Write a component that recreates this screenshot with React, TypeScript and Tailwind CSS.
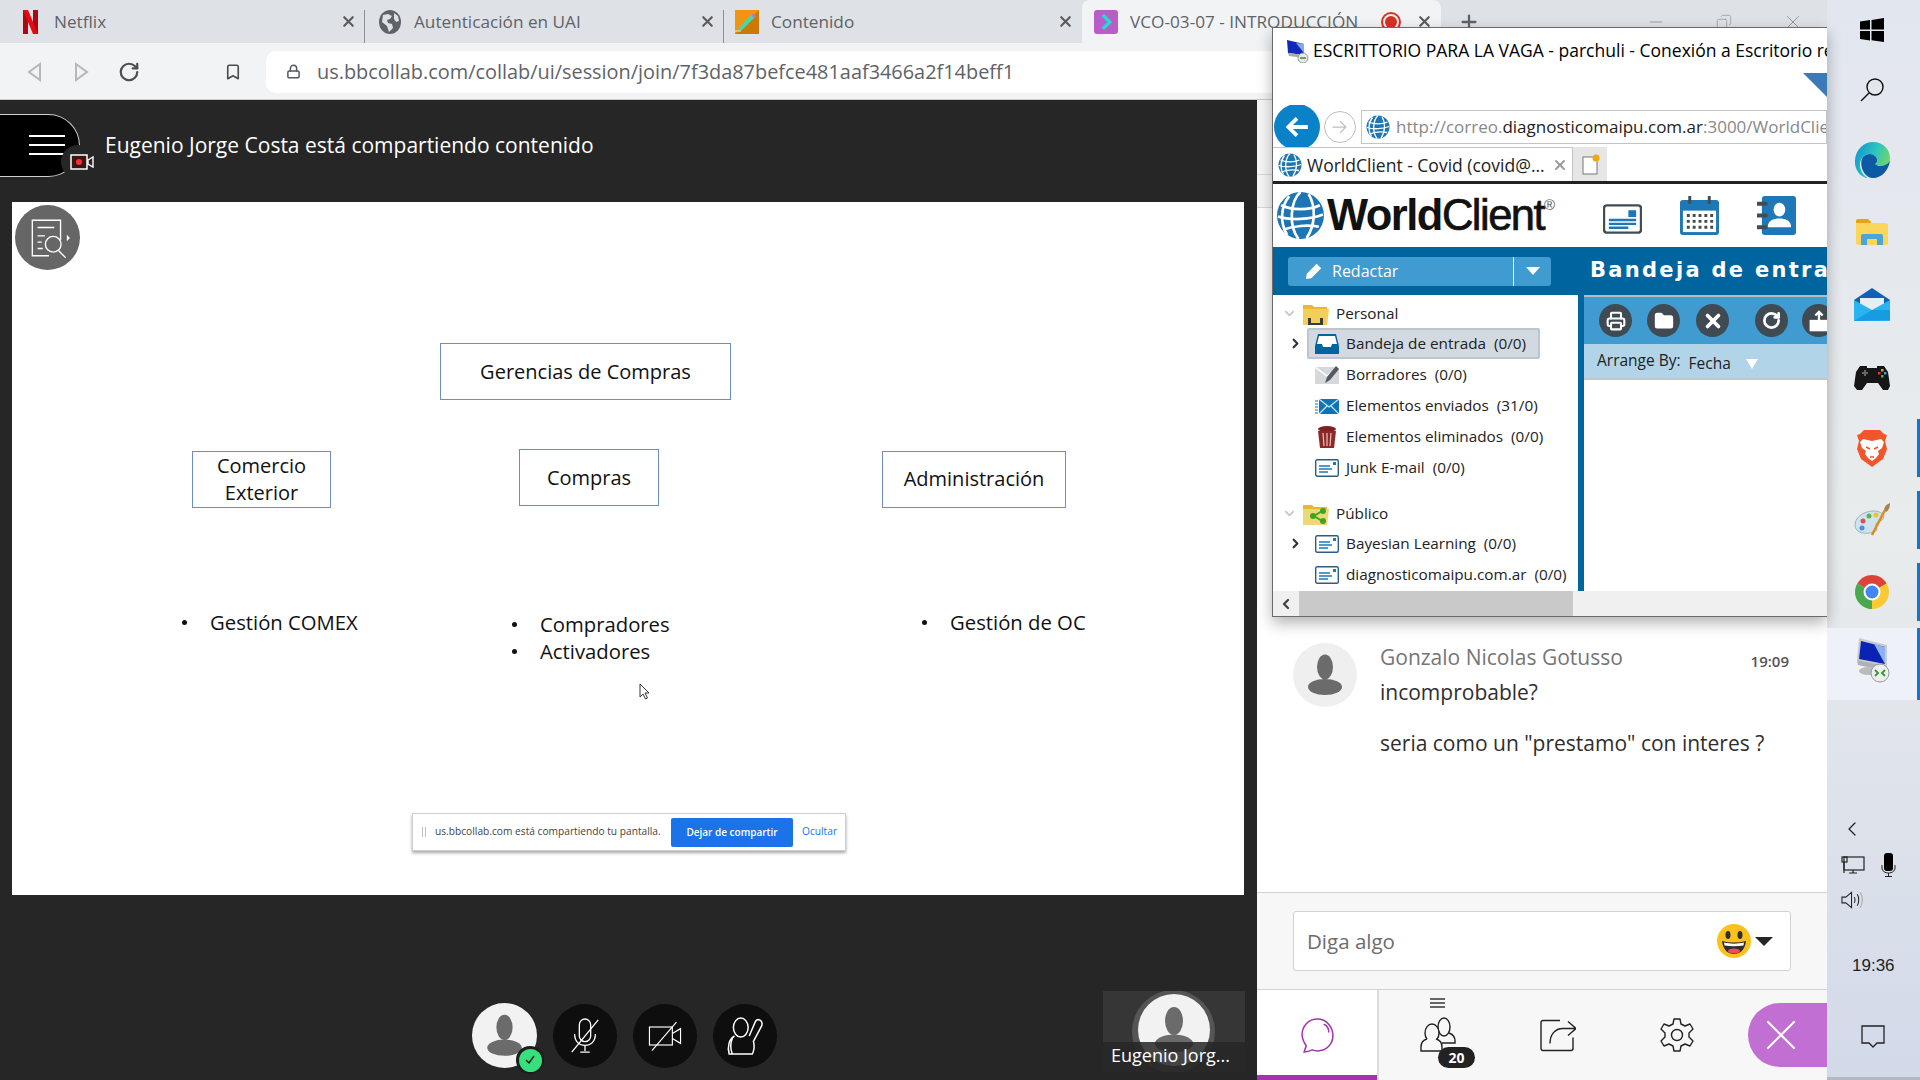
import { ChevronDown, ChevronLeft, ChevronRight, Copy, Lock, Bookmark, RotateCw, Plus, X, Printer, Folder, Minus } from "lucide-react";

function Earth({ className }: { className: string }) {
  return (
    <svg viewBox="0 0 48 48" className={className}>
      <circle cx="24" cy="24" r="23" fill="#1d75b3" />
      <g fill="none" stroke="#fff" strokeWidth="2.6">
        <path d="M5 14c10 5 28 5 38 0M2 25c12 4 32 3 44-2M7 38c10-4 24-5 35-3" />
        <path d="M24 1C14 10 12 34 22 47M32 3c7 12 7 30-2 43M13 5C4 16 4 32 11 43" />
      </g>
    </svg>
  );
}

function NetflixIcon() {
  return (
    <svg viewBox="0 0 15 24" className="h-[24px] w-[15px]">
      <path d="M0 0h5v24H0z" fill="#b1060f" />
      <path d="M10 0h5v24h-5z" fill="#b1060f" />
      <path d="M0 0h5l10 24h-5z" fill="#e50914" />
    </svg>
  );
}

function GrayGlobe() {
  return (
    <svg viewBox="0 0 22 24" className="h-[24px] w-[22px]">
      <ellipse cx="11" cy="12" rx="11" ry="12" fill="#5f6368" />
      <path d="M4 5l5-1 4 2-2 3-3 1 1 3 4 1 1 4-4 4-2-6-5-4zM15 3l4 3 1 5-3 1-2-3z" fill="#dee1e6" />
    </svg>
  );
}

function PencilTab() {
  return (
    <svg viewBox="0 0 24 24" className="size-[24px]">
      <rect width="24" height="24" fill="#f59311" />
      <path d="M0 24h24V0z" fill="#cc7a05" />
      <path d="M4 18L17 4l3 3L7 20l-4 1z" fill="#43d9b0" />
      <path d="M16 5l2-2 3 3-2 2z" fill="#d06ed8" />
      <path d="M0 21h6" stroke="#fff" strokeWidth="0.8" />
    </svg>
  );
}

function CollabTab() {
  return (
    <svg viewBox="0 0 24 24" className="size-[24px]">
      <rect width="24" height="24" rx="3" fill="#b85cc8" />
      <path d="M9 5l7 7-7 7" fill="none" stroke="#2be0c0" strokeWidth="3" />
      <path d="M8 6l6 6-6 6" fill="none" stroke="#32c0ff" strokeWidth="1.4" />
    </svg>
  );
}

function BrowserTab({ width, icon, title, active, separator }: { width: string; icon: React.ReactNode; title: string; active?: boolean; separator?: boolean }) {
  return (
    <div className={`relative flex h-[43px] shrink-0 items-center ${width} ${active ? "rounded-t-lg bg-[#f2f3f5]" : ""}`}>
      <span className="flex w-[24px] shrink-0 justify-center">{icon}</span>
      <span className="ml-[12px] flex-1 overflow-hidden whitespace-nowrap text-[17.2px] text-[#5f6368]">{title}</span>
      {active ? <span className="ml-[8px] mr-[15px] grid size-[20px] shrink-0 place-items-center rounded-full border-2 border-[#d93025]"><span className="size-[12px] rounded-full bg-[#d93025]" /></span> : null}
      <X className="mr-[8px] size-[17px] shrink-0 text-[#5a5a5a]" strokeWidth={3} />
      {separator ? <span className="absolute bottom-0 right-0 top-[10px] w-px bg-[#8b8e92]" /> : null}
    </div>
  );
}

function TabStrip() {
  return (
    <div className="flex h-[43px] items-center bg-[#dee1e6]">
      <BrowserTab width="w-[365px] pl-[18px]" icon={<NetflixIcon />} title="Netflix" separator />
      <BrowserTab width="w-[359px] pl-[13px]" icon={<GrayGlobe />} title="Autenticación en UAI" separator />
      <BrowserTab width="w-[358px] pl-[11px]" icon={<PencilTab />} title="Contenido" />
      <BrowserTab width="w-[359px] pl-[12px]" icon={<CollabTab />} title="VCO-03-07 - INTRODUCCIÓN" active />
      <Plus className="ml-[17px] size-[22px] text-[#5f6368]" strokeWidth={2.5} />
      <div className="ml-auto flex items-center gap-[50px] pr-[23px] text-[#8d8f93]">
        <Minus className="size-[20px]" strokeWidth={1} />
        <Copy className="size-[16px] -scale-x-100" strokeWidth={1} />
        <X className="size-[22px]" strokeWidth={1} />
      </div>
    </div>
  );
}

function Toolbar() {
  return (
    <div className="flex h-[57px] items-center border-b border-[#c9c9c9] bg-[#f2f3f5] pl-[26px] pt-[1px]">
      <svg viewBox="0 0 16 20" className="h-[20px] w-[16px]"><path d="M14 2L3 10l11 8z" fill="none" stroke="#b5b7ba" strokeWidth="2" /></svg>
      <svg viewBox="0 0 16 20" className="ml-[32px] h-[20px] w-[16px]"><path d="M2 2l11 8-11 8z" fill="none" stroke="#b5b7ba" strokeWidth="2" /></svg>
      <RotateCw className="ml-[28px] size-[22px] text-[#4a4d51]" strokeWidth={2.4} />
      <Bookmark className="ml-[84px] h-[22px] w-[18px] text-[#4a4d51]" strokeWidth={2.2} />
      <div className="ml-[24px] flex h-[42px] flex-1 items-center rounded-l-[10px] bg-white pl-[20px]">
        <Lock className="size-[15px] text-[#55585c]" strokeWidth={2.4} />
        <span className="ml-[16px] text-[19.9px] text-[#5f6368]">us.bbcollab.com/collab/ui/session/join/7f3da87befce481aaf3466a2f14beff1</span>
      </div>
    </div>
  );
}

function SessionHeader() {
  return (
    <div className="flex h-[102px] shrink-0 items-center pb-[12px]">
      <div className="relative flex h-[63px] w-[80px] items-center justify-end rounded-r-[32px] border border-l-0 border-[#d0d0d0] bg-black pr-[14px]">
        <div className="flex w-[36px] flex-col gap-[7px]">
          <span className="h-[2px] bg-white" />
          <span className="h-[2px] bg-white" />
          <span className="h-[2px] bg-white" />
        </div>
        <span className="absolute -right-[16px] top-[30px] flex size-[34px] items-center justify-end rounded-full bg-[#262626] pr-[1px]">
          <svg viewBox="0 0 24 16" className="h-[16px] w-[24px]">
            <rect x="1" y="1" width="16" height="14" fill="#3a1616" stroke="#fff" strokeWidth="1.5" />
            <circle cx="9" cy="8" r="3" fill="#ff2d2d" />
            <path d="M18 6l5-3v10l-5-3z" fill="none" stroke="#fff" strokeWidth="1.4" />
          </svg>
        </span>
      </div>
      <span className="ml-[25px] mt-[2px] text-[21px] text-white">Eugenio Jorge Costa está compartiendo contenido</span>
    </div>
  );
}

function SlideBox({ className, children }: { className: string; children: React.ReactNode }) {
  return (
    <div className={`absolute flex items-center justify-center border border-[#6d8ebf] text-center text-[20px] leading-[27px] text-[#111] ${className}`}>
      {children}
    </div>
  );
}

function Bullet({ className, children }: { className: string; children: string }) {
  return (
    <div className={`absolute flex items-center text-[20.3px] leading-[27px] text-[#111] ${className}`}>
      <span className="flex w-[28px]"><span className="size-[5px] rounded-full bg-[#111]" /></span>
      {children}
    </div>
  );
}

function Slide() {
  return (
    <div className="relative ml-[12px] h-[693px] w-[1232px] shrink-0 bg-white">
      <div className="absolute left-[3px] top-[3px] grid size-[65px] place-items-center rounded-full bg-[#666]">
        <svg viewBox="0 0 44 44" className="size-[46px]" fill="none" stroke="#fff" strokeWidth="1.3">
          <path d="M34 24V5H7v34h16" />
          <path d="M12 12h16M12 20h7M12 26h4M12 32h5" />
          <circle cx="27" cy="28" r="7.5" />
          <path d="M32 34l7 7" />
          <path d="M40 19l3 3-3 3z" fill="#fff" stroke="none" />
        </svg>
      </div>
      <SlideBox className="left-[428px] top-[141px] h-[57px] w-[291px]">Gerencias de Compras</SlideBox>
      <SlideBox className="left-[180px] top-[249px] h-[57px] w-[139px] pb-[2px]"><span>Comercio<br />Exterior</span></SlideBox>
      <SlideBox className="left-[507px] top-[247px] h-[57px] w-[140px]">Compras</SlideBox>
      <SlideBox className="left-[870px] top-[249px] h-[57px] w-[184px] pb-[2px]">Administración</SlideBox>
      <Bullet className="left-[170px] top-[407px]">Gestión COMEX</Bullet>
      <Bullet className="left-[500px] top-[409px]">Compradores</Bullet>
      <Bullet className="left-[500px] top-[436px]">Activadores</Bullet>
      <Bullet className="left-[910px] top-[407px]">Gestión de OC</Bullet>
      <svg viewBox="0 0 12 18" className="absolute left-[627px] top-[481px] h-[18px] w-[12px]">
        <path d="M1 1v13l3-3 2.500 5 2-1-2.500-5h4z" fill="#fff" stroke="#333" strokeWidth="1" />
      </svg>
      <div className="absolute left-[400px] top-[611px] flex h-[38px] w-[434px] items-center border border-[#cfcfcf] bg-white pl-[9px] shadow-[0_2px_3px_rgba(0,0,0,.35)]">
        <span className="flex gap-[2px]"><span className="h-[10px] w-px bg-[#bbb]" /><span className="h-[10px] w-px bg-[#bbb]" /></span>
        <span className="ml-[9px] w-[228px] shrink-0 whitespace-nowrap text-[10.2px] text-[#444]">us.bbcollab.com está compartiendo tu pantalla.</span>
        <span className="ml-[8px] flex h-[29px] w-[122px] shrink-0 items-center justify-center rounded-[2px] bg-[#1a73e8] text-[10px] font-semibold text-white">Dejar de compartir</span>
        <span className="ml-[9px] text-[10.2px] text-[#1a73e8]">Ocultar</span>
      </div>
    </div>
  );
}

function UserSilhouette({ className }: { className: string }) {
  return (
    <svg viewBox="0 0 64 64" className={className}>
      <ellipse cx="32" cy="24" rx="8" ry="12.500" fill="#6b6b6b" />
      <ellipse cx="32" cy="44" rx="17" ry="8" fill="#6b6b6b" />
    </svg>
  );
}

function RoundControl({ children }: { children: React.ReactNode }) {
  return <div className="grid size-[64px] place-items-center rounded-full bg-[#0e0e0e]">{children}</div>;
}

function SessionControls() {
  return (
    <div className="relative flex-1">
      <div className="absolute left-[472px] top-[108px] flex items-center gap-[16px]">
        <div className="relative size-[65px] rounded-full bg-[#f2f2f2]">
          <UserSilhouette className="size-full" />
          <span className="absolute -bottom-[6px] -right-[7px] grid size-[28px] place-items-center rounded-full bg-[#1c1c1c]">
            <span className="grid size-[23px] place-items-center rounded-full bg-[#36e07c]">
              <svg viewBox="0 0 12 12" className="size-[12px]"><path d="M2 6l3 3 5-7" fill="none" stroke="#111" strokeWidth="1.3" /></svg>
            </span>
          </span>
        </div>
        <RoundControl>
          <svg viewBox="0 0 36 40" className="h-[40px] w-[34px]" fill="none" stroke="#fff" strokeWidth="1.4">
            <rect x="12" y="2" width="12" height="24" rx="6" />
            <path d="M7 18c0 8 5 12 11 12s11-4 11-12M18 30v6M13 37h10" />
            <path d="M4 37L32 3" />
          </svg>
        </RoundControl>
        <RoundControl>
          <svg viewBox="0 0 44 40" className="h-[40px] w-[36px]" fill="none" stroke="#fff" strokeWidth="1.4">
            <rect x="3" y="9" width="28" height="22" />
            <path d="M31 17l10-6v18l-10-6" />
            <path d="M6 38L36 3" />
          </svg>
        </RoundControl>
        <RoundControl>
          <svg viewBox="0 0 36 36" className="size-[38px]" fill="none" stroke="#fff" strokeWidth="1.4">
            <ellipse cx="14" cy="10" rx="7" ry="9" />
            <path d="M8 18c-5 3-7 10-5 17h22c2-4 2-8 1-12l8-15c1-5-4-7-6-4l-6 14" />
            <path d="M6 20c-2 5-2 10 0 15" />
          </svg>
        </RoundControl>
      </div>
      <div className="absolute bottom-[8px] left-[1103px] h-[81px] w-[142px] overflow-hidden bg-[#363636]">
        <div className="absolute left-[29px] -top-[1px] size-[83px] rounded-full bg-[#555]" />
        <div className="absolute left-[35px] top-[3px] size-[72px] rounded-full bg-[#f2f2f2]">
          <UserSilhouette className="size-full" />
        </div>
        <div className="absolute inset-x-0 bottom-0 flex h-[30px] items-center whitespace-nowrap bg-[#262626]/85 pb-[3px] pl-[8px] text-[18px] text-white">Eugenio Jorg...</div>
      </div>
    </div>
  );
}

function ChatPanel() {
  return (
    <div className="flex flex-1 flex-col bg-white">
      <div className="h-[75px] shrink-0 border-b border-[#d9d9d9] bg-[#f6f6f6]" />
      <div className="h-[33px] shrink-0 border-b border-[#d9d9d9] bg-[#f6f6f6]" />
      <div className="flex flex-1 px-[36px] pt-[435px]">
        <div className="size-[64px] shrink-0 rounded-full bg-[#efefef]">
          <UserSilhouette className="size-full" />
        </div>
        <div className="ml-[23px] flex-1 pt-[1px] text-[21px] text-[#2e2e2e]">
          <div className="flex h-[28px] items-center justify-between">
            <span className="text-[#757575]">Gonzalo Nicolas Gotusso</span>
            <span className="mr-[2px] mt-[6px] text-[15px] font-semibold text-[#555]">19:09</span>
          </div>
          <p className="mt-[6px] leading-[28px]">incomprobable?</p>
          <p className="mt-[23px] leading-[28px]">seria como un "prestamo" con interes ?</p>
        </div>
      </div>
      <div className="flex h-[98px] shrink-0 items-center border-y border-[#d2d2d2] bg-[#f7f7f7] px-[36px]">
        <div className="flex h-[60px] flex-1 items-center rounded-[3px] border border-[#d2d2d2] bg-white pl-[13px] pr-[17px]">
          <span className="flex-1 text-[20.5px] text-[#6c6c6c]">Diga algo</span>
          <svg viewBox="0 0 34 34" className="size-[34px]">
            <circle cx="17" cy="17" r="17" fill="#fcc21b" />
            <ellipse cx="11" cy="11" rx="2.500" ry="4" fill="#2f2f2f" />
            <ellipse cx="23" cy="11" rx="2.500" ry="4" fill="#2f2f2f" />
            <path d="M5 17c8 2 16 2 24 0-1 9-6 13-12 13S6 26 5 17z" fill="#2f2f2f" />
            <path d="M7 18.500c6 1.500 14 1.500 20 0l-.5 3c-6 1-13 1-19 0z" fill="#fff" />
            <ellipse cx="17" cy="27" rx="6" ry="2.500" fill="#ed4c5c" />
          </svg>
          <svg viewBox="0 0 18 9" className="ml-[4px] h-[9px] w-[18px]"><path d="M0 0h18L9 9z" fill="#262626" /></svg>
        </div>
      </div>
      <div className="flex h-[90px] shrink-0 bg-[#f7f7f7]">
        <div className="flex w-[120px] items-center justify-center border-b-[5px] border-[#a433b0] bg-white pt-[5px]">
          <svg viewBox="0 0 36 36" className="size-[37px]" fill="none" stroke="#a433b0" strokeWidth="1.5">
            <path d="M18 2C9 2 3 9 3 17c0 5 2 8 4 11l-2 6c3 0 6-1 8-2 2 1 3 1 5 1 9 0 15-7 15-15S27 2 18 2z" />
            <path d="M24 7c3 1 5 4 5 8" />
          </svg>
        </div>
        <div className="relative flex flex-1 items-center border-l-2 border-[#dcdcdc]">
          <div className="absolute left-[51px] top-[8px] flex w-[15px] flex-col gap-[2px]">
            <span className="h-[2px] bg-[#666]" /><span className="h-[2px] bg-[#666]" /><span className="h-[2px] bg-[#666]" />
          </div>
          <div className="relative ml-[41px] pb-[3px]">
            <svg viewBox="0 0 36 36" className="size-[36px]" fill="none" stroke="#222" strokeWidth="1.4">
              <ellipse cx="24" cy="11" rx="6" ry="9" />
              <path d="M29 17c3 1 6 3 6 8v2H22" />
              <ellipse cx="12" cy="17" rx="7" ry="9" fill="#f7f7f7" />
              <path d="M7 23c-4 1-6 4-6 8v4h21v-4c0-4-2-7-6-8" fill="#f7f7f7" />
            </svg>
            <span className="absolute -bottom-[13px] left-[18px] flex h-[21px] w-[37px] items-center justify-center rounded-full bg-[#222] text-[14px] font-bold text-white">20</span>
          </div>
          <svg viewBox="0 0 36 32" className="ml-[84px] h-[33px] w-[36px]" fill="none" stroke="#222" strokeWidth="1.4">
            <path d="M33 18v11a2 2 0 0 1-2 2H3a2 2 0 0 1-2-2V3a2 2 0 0 1 2-2h17" />
            <path d="M10 24c0-9 5-15 13-15h12M28 2l8 7-8 7" />
          </svg>
          <svg viewBox="0 0 36 36" className="ml-[83px] size-[36px]" fill="none" stroke="#222" strokeWidth="1.4">
            <path d="M15 2h6l1 5 4 2 5-2 3 5-4 4v4l4 4-3 5-5-2-4 2-1 5h-6l-1-5-4-2-5 2-3-5 4-4v-4l-4-4 3-5 5 2 4-2z" strokeLinejoin="round" />
            <circle cx="18" cy="18" r="5.500" />
          </svg>
          <div className="ml-auto flex h-[64px] w-[79px] items-center justify-start rounded-l-[32px] bg-[#c16fd2] pl-[18px]">
            <svg viewBox="0 0 30 30" className="size-[30px]" stroke="#fff" strokeWidth="2.2" strokeLinecap="round"><path d="M2 2l26 26M28 2L2 28" /></svg>
          </div>
        </div>
      </div>
    </div>
  );
}

function FolderIcon({ kind }: { kind: "inbox" | "draft" | "sent" | "trash" | "box" }) {
  if (kind === "inbox") {
    return (
      <svg viewBox="0 0 24 24" className="size-[24px]">
        <path d="M3 2h18l3 12v8H0v-8z" fill="#00659e" />
        <path d="M4 4h16l2 8h-5l-1 3H8l-1-3H2z" fill="#fff" />
      </svg>
    );
  }
  if (kind === "draft") {
    return (
      <svg viewBox="0 0 24 24" className="size-[24px]">
        <rect y="4" width="24" height="17" fill="#d6d9dc" />
        <path d="M0 4l12 9 12-9" fill="none" stroke="#fff" strokeWidth="1.500" />
        <path d="M10 20l2-6L21 3l3 3-9 11z" fill="#55595e" />
      </svg>
    );
  }
  if (kind === "sent") {
    return (
      <svg viewBox="0 0 24 24" className="size-[24px]">
        <rect x="4" y="5" width="20" height="15" fill="#0f74b5" />
        <path d="M4 5l10 8 10-8M4 20l8-8M24 20l-8-8" fill="none" stroke="#cfe8f6" strokeWidth="1.200" />
        <path d="M0 7h3M0 10h3M0 13h3M0 16h3M0 19h3" stroke="#0f74b5" strokeWidth="1.200" />
      </svg>
    );
  }
  if (kind === "trash") {
    return (
      <svg viewBox="0 0 20 24" className="h-[24px] w-[20px]">
        <ellipse cx="10" cy="4" rx="9" ry="3" fill="#7e2020" />
        <path d="M1 6h18l-2 17H3z" fill="#8f2828" />
        <path d="M6 8l1 13M10 8v13M14 8l-1 13" stroke="#e8c4c4" strokeWidth="1.200" />
      </svg>
    );
  }
  return (
    <svg viewBox="0 0 24 18" className="h-[18px] w-[24px]">
      <rect x=".7" y=".7" width="22.600" height="16.600" rx="1.500" fill="#fff" stroke="#2f5d80" strokeWidth="1.400" />
      <path d="M4 7h11M4 10h13M4 13h9" stroke="#1d7ab8" strokeWidth="1.500" />
      <rect x="18" y="3" width="3" height="3" fill="#1d7ab8" />
    </svg>
  );
}

function TreeRow({ kind, label, count, chevron, selected }: { kind: "inbox" | "draft" | "sent" | "trash" | "box"; label: string; count: string; chevron?: boolean; selected?: boolean }) {
  return (
    <div className="flex h-[31px] items-center pl-[16px] text-[15.3px] text-[#222]">
      <span className="w-[18px]">{chevron ? <ChevronRight className="-ml-[1px] size-[15px] text-[#333]" strokeWidth={3.5} /> : null}</span>
      <div className={`flex h-[31px] flex-1 items-center whitespace-nowrap rounded-[2px] border-2 pl-[6px] ${selected ? "mr-[38px] border-[#bcc6cf] bg-[#d2d9e0]" : "border-transparent"}`}>
        <span className="flex w-[24px] shrink-0 justify-center"><FolderIcon kind={kind} /></span>
        <span className="ml-[7px]">{label}&nbsp; {count}</span>
      </div>
    </div>
  );
}

function GroupRow({ label, shared }: { label: string; shared?: boolean }) {
  return (
    <div className="flex h-[29px] items-center pl-[9px] text-[15.3px] text-[#222]">
      <ChevronDown className="size-[15px] text-[#c6c6c6]" strokeWidth={3} />
      <svg viewBox="0 0 26 22" className="ml-[6px] h-[22px] w-[26px]">
        <path d="M0 2h9l2 2h13v4H0z" fill="#e8b82e" />
        <path d="M0 6h26l-2 16H0z" fill={shared ? "#ecd77a" : "#f2ce5b"} />
        {shared ? <path d="M11 13l8-5M11 13l8 5" stroke="#3ea51d" strokeWidth="2" /> : <rect x="5" y="15" width="15" height="7" fill="#3b3b3b" />}
        {shared ? <><circle cx="10" cy="13" r="3" fill="#3ea51d" /><circle cx="20" cy="8" r="3" fill="#3ea51d" /><circle cx="20" cy="18" r="3" fill="#3ea51d" /></> : <rect x="8" y="15" width="9" height="5" fill="#f2ce5b" />}
      </svg>
      <span className="ml-[7px]">{label}</span>
    </div>
  );
}

function RoundTool({ children, className }: { children: React.ReactNode; className?: string }) {
  return <div className={`grid size-[33px] shrink-0 place-items-center rounded-full bg-[#404a52] text-white ${className ?? ""}`}>{children}</div>;
}

function RemoteWindow() {
  return (
    <div className="absolute left-[1272px] top-[27px] h-[590px] w-[555px] overflow-hidden border-y border-l border-[#6a6a6a] bg-white shadow-[0_6px_14px_rgba(0,0,0,.3)]">
      <div className="flex h-[45px] items-center overflow-hidden pl-[12px] text-[17.5px] text-black">
        <svg viewBox="0 0 24 24" className="size-[24px] shrink-0">
          <path d="M2 1l17 4v11L3 14z" fill="#1029b8" />
          <path d="M11 4l8 1v9z" fill="#86a8ee" />
          <path d="M3 14l16 2v3L4 17z" fill="#aaa" />
          <circle cx="18" cy="19" r="5" fill="#e8e8e8" stroke="#888" strokeWidth=".8" />
          <path d="M15 19h6" stroke="#2e9b2e" strokeWidth="1.500" />
        </svg>
        <span className="ml-[4px] whitespace-nowrap">ESCRITTORIO PARA LA VAGA - parchuli - Conexión a Escritorio remoto</span>
      </div>
      <div className="relative h-[32px]">
        <svg viewBox="0 0 24 24" className="absolute right-0 top-0 size-[24px]"><path d="M0 0h24v24z" fill="#3b7ab5" /></svg>
      </div>
      <div className="flex h-[42px] items-center overflow-hidden pl-[1px] pt-[2px]">
        <div className="z-10 grid h-[46px] w-[46px] shrink-0 place-items-center rounded-full bg-[#0a82c8]">
          <svg viewBox="0 0 24 24" className="size-[26px]" fill="none" stroke="#fff" strokeWidth="3.500"><path d="M22 12H4M12 4l-8 8 8 8" /></svg>
        </div>
        <div className="ml-[4px] grid size-[32px] shrink-0 place-items-center rounded-full border border-[#bfbfbf]">
          <svg viewBox="0 0 24 24" className="size-[20px]" fill="none" stroke="#bfbfbf" strokeWidth="1.500"><path d="M3 12h16M12 5l7 7-7 7" /></svg>
        </div>
        <div className="ml-[5px] flex h-[34px] flex-1 items-center overflow-hidden whitespace-nowrap border border-[#c4c4c4] pl-[4px] text-[17px] text-[#888]">
          <Earth className="size-[24px] shrink-0" />
          <span className="ml-[6px]">http://correo.<span className="text-[#222]">diagnosticomaipu.com.ar</span>:3000/WorldClient.dll</span>
        </div>
      </div>
      <div className="flex h-[37px] items-end border-b-[3px] border-[#222]">
        <div className="flex h-[34px] w-[300px] shrink-0 items-center border-r border-t border-[#c4c4c4] bg-white pl-[5px] pt-[1px] text-[17.5px] text-[#222]">
          <Earth className="size-[24px] shrink-0" />
          <span className="ml-[5px] flex-1 whitespace-nowrap">WorldClient - Covid (covid@...</span>
          <X className="mr-[4px] size-[16px] shrink-0 text-[#9a9a9a]" strokeWidth={3} />
        </div>
        <div className="grid h-[34px] w-[34px] shrink-0 place-items-center bg-[#e6e6e6]">
          <svg viewBox="0 0 24 24" className="size-[24px]">
            <rect x="5" y="5" width="14" height="17" fill="#fff" stroke="#777" />
            <circle cx="18" cy="6" r="3.500" fill="#f5a60a" />
          </svg>
        </div>
      </div>
      <div className="flex h-[63px] items-center pl-[3px]">
        <Earth className="size-[49px] shrink-0" />
        <span className="ml-[2px] w-[217px] shrink-0 whitespace-nowrap text-[43.5px] tracking-[-1.500px] text-[#111] [font-family:'Liberation_Sans',sans-serif]">
          <span className="font-bold">World</span><span className="[-webkit-text-stroke:0.7px_#111]">Client</span>
        </span>
        <span className="-mt-[20px] w-[14px] shrink-0 text-[15px] text-[#555] [font-family:'Liberation_Sans',sans-serif]">®</span>
        <svg viewBox="0 0 40 30" className="ml-[45px] mt-[6px] h-[30px] w-[39px] shrink-0">
          <rect x="1" y="1" width="38" height="28" rx="3" fill="#fff" stroke="#424c54" strokeWidth="2.500" />
          <path d="M6 16h28M6 20h28M6 24h20" stroke="#1d78b5" strokeWidth="2.500" />
          <rect x="26" y="6" width="8" height="7" fill="#1d78b5" />
        </svg>
        <svg viewBox="0 0 40 40" className="ml-[38px] size-[39px] shrink-0">
          <rect y="4" width="40" height="36" rx="3" fill="#1d78b5" />
          <rect x="3" y="15" width="34" height="22" fill="#fff" />
          <path d="M10 0v8M30 0v8" stroke="#424c54" strokeWidth="3" />
          <path d="M7 20h27M7 26h27M7 32h27" stroke="#424c54" strokeWidth="3" strokeDasharray="3 3" />
        </svg>
        <svg viewBox="0 0 40 40" className="ml-[38px] size-[39px] shrink-0">
          <rect x="5" width="35" height="40" rx="3" fill="#1d78b5" />
          <path d="M0 8h9M0 20h9M0 32h9" stroke="#424c54" strokeWidth="4" strokeLinecap="round" />
          <ellipse cx="23" cy="14" rx="6" ry="7" fill="#fff" />
          <path d="M11 32c0-7 6-9 12-9s12 2 12 9z" fill="#fff" />
        </svg>
      </div>
      <div className="flex h-[48px] items-center overflow-hidden bg-[#00659e] pl-[15px]">
        <div className="flex h-[29px] w-[263px] shrink-0 items-center rounded-[3px] bg-[#3f9bd0] text-[16px] text-white">
          <svg viewBox="0 0 20 20" className="ml-[17px] size-[18px]" fill="#fff"><path d="M1 19l1-6L13 2l5 5L7 18z" /></svg>
          <span className="ml-[9px] flex-1">Redactar</span>
          <span className="flex h-full w-[38px] items-center justify-center border-l border-white">
            <svg viewBox="0 0 14 8" className="h-[8px] w-[14px]"><path d="M0 0h14L7 8z" fill="#fff" /></svg>
          </span>
        </div>
        <span className="ml-[39px] whitespace-nowrap text-[21px] font-bold tracking-[2.300px] text-white [font-family:'DejaVu_Sans',sans-serif]">Bandeja de entrada</span>
      </div>
      <div className="flex h-[296px]">
        <div className="w-[305px] shrink-0 pt-[4px]">
          <GroupRow label="Personal" />
          <TreeRow kind="inbox" label="Bandeja de entrada" count="(0/0)" chevron selected />
          <TreeRow kind="draft" label="Borradores" count="(0/0)" />
          <TreeRow kind="sent" label="Elementos enviados" count="(31/0)" />
          <TreeRow kind="trash" label="Elementos eliminados" count="(0/0)" />
          <TreeRow kind="box" label="Junk E-mail" count="(0/0)" />
          <div className="h-[16px]" />
          <GroupRow label="Público" shared />
          <TreeRow kind="box" label="Bayesian Learning" count="(0/0)" chevron />
          <TreeRow kind="box" label="diagnosticomaipu.com.ar" count="(0/0)" />
        </div>
        <div className="w-[6px] shrink-0 bg-[#00659e]" />
        <div className="flex-1 overflow-hidden">
          <div className="flex h-[49px] items-center border-t-2 border-[#b8bcc0] bg-[#3f9bd0] pl-[15px]">
            <RoundTool><Printer className="size-[20px]" strokeWidth={2.500} /></RoundTool>
            <RoundTool className="ml-[15px]"><Folder className="size-[20px]" fill="#fff" strokeWidth={2} /></RoundTool>
            <RoundTool className="ml-[16px]"><X className="size-[22px]" strokeWidth={4} /></RoundTool>
            <RoundTool className="ml-[26px]"><RotateCw className="size-[19px]" strokeWidth={3.500} /></RoundTool>
            <RoundTool className="ml-[14px]">
              <svg viewBox="0 0 24 24" className="size-[22px]" fill="none" stroke="#fff" strokeWidth="2.500">
                <path d="M12 11V3M8 6l4-4 4 4" />
                <rect x="3" y="12" width="18" height="10" fill="#fff" />
              </svg>
            </RoundTool>
          </div>
          <div className="flex h-[36px] items-center border-b-2 border-[#c6c6c6] bg-[#b1d4e8] pl-[13px] text-[15.500px] text-[#222]">
            <span>Arrange By:</span>
            <span className="ml-[8px] pt-[5px]">Fecha</span>
            <svg viewBox="0 0 12 10" className="ml-[15px] mt-[5px] h-[10px] w-[12px]"><path d="M0 0h12L6 10z" fill="#fff" /></svg>
          </div>
        </div>
      </div>
      <div className="flex h-[26px] items-center bg-[#f0f0f0]">
        <span className="flex w-[26px] justify-center"><ChevronLeft className="size-[16px] text-[#444]" strokeWidth={3.500} /></span>
        <span className="h-full w-[274px] bg-[#c9c9c9]" />
      </div>
    </div>
  );
}

function WindowsLogo() {
  return (
    <svg viewBox="0 0 24 24" className="size-[24px]" fill="#000">
      <path d="M0 3.500l10-1.400v9.400H0zM11.500 2L24 0v11.500H11.500zM0 13h10v9.400L0 21zM11.500 13H24v11l-12.500-1.800z" />
    </svg>
  );
}

function EdgeIcon() {
  return (
    <svg viewBox="0 0 36 36" className="size-[36px]">
      <defs>
        <linearGradient id="edge" x1="0" y1="0" x2="1" y2="0.400"><stop offset="0" stopColor="#0f8fd0" /><stop offset="0.600" stopColor="#2bc6c0" /><stop offset="1" stopColor="#6ed66a" /></linearGradient>
      </defs>
      <path d="M1 18C2 7 10 0 19 0c10 0 17 7 17 16 0 5-4 8-9 8-3 0-5-1-6-2 2-1 3-4 1-7-3-4-9-4-13 0-3 3-4 8-2 13 1 3 3 6 7 8C7 36 0 28 1 18z" fill="url(#edge)" />
      <path d="M9 15c4-4 10-4 13 0 2 3 1 6-1 7 2 2 6 3 10 1 3-1 4-3 5-5-1 10-8 18-17 18-4 0-6-2-8-4-4-5-5-13-2-17z" fill="#0c59a4" />
    </svg>
  );
}

function FolderTaskIcon() {
  return (
    <svg viewBox="0 0 32 26" className="h-[26px] w-[32px]">
      <path d="M0 2a2 2 0 0 1 2-2h10l3 3v4H0z" fill="#e2a60f" />
      <path d="M0 4h30a2 2 0 0 1 2 2v18a2 2 0 0 1-2 2H2a2 2 0 0 1-2-2z" fill="#fcd65b" />
      <path d="M5 26v-9a2 2 0 0 1 2-2h18a2 2 0 0 1 2 2v9h-6v-6H11v6z" fill="#4da3dc" />
    </svg>
  );
}

function MailTaskIcon() {
  return (
    <svg viewBox="0 0 36 33" className="h-[33px] w-[36px]">
      <path d="M18 0l18 12v4H0v-4z" fill="#0f62b6" />
      <path d="M6 10h24v12H6z" fill="#e8eef5" />
      <path d="M0 12l18 10 18-10v21H0z" fill="#27b4f0" />
      <path d="M0 33l36-1V22L18 22z" fill="#1391d8" opacity=".7" />
    </svg>
  );
}

function PadIcon() {
  return (
    <svg viewBox="0 0 36 27" className="h-[27px] w-[36px]">
      <path d="M6 3h7v2h10V3h7l4 6 2 14-2 4h-5l-5-7H13l-5 7H3l-3-4L2 9z" fill="#161616" />
      <rect x="8" y="9" width="6" height="2" fill="#666" />
      <rect x="10" y="7" width="2" height="6" fill="#666" />
      <rect x="27" y="6" width="2.500" height="2.500" fill="#e8a21c" />
      <rect x="24" y="9" width="2.500" height="2.500" fill="#d33" />
      <rect x="30" y="9" width="2.500" height="2.500" fill="#33a0e8" />
      <rect x="27" y="12" width="2.500" height="2.500" fill="#3bbd4a" />
    </svg>
  );
}

function BraveIcon() {
  return (
    <svg viewBox="0 0 30 37" className="h-[37px] w-[30px]">
      <path d="M7 0h16l4 4 3 1-2 6 2 8-4 10-11 8-11-8L0 19l2-8-2-6 3-1z" fill="#f1562b" />
      <path d="M6 9l9 2 9-2 3 3-2 6-4 3 1 3-3 4-4 3-4-3-3-4 1-3-4-3-2-6z" fill="#fff" />
      <path d="M9 17l4 2M21 17l-4 2M13 27h4" stroke="#f1562b" strokeWidth="1.500" />
    </svg>
  );
}

function PaletteIcon() {
  return (
    <svg viewBox="0 0 36 36" className="size-[36px]">
      <path d="M1 23c0-9 10-14 19-14 7 0 11 4 9 8-2 3-7 2-7 6 0 3 3 5-2 7-9 3-19 1-19-7z" fill="#cfe3ee" stroke="#8fa6b3" strokeWidth=".8" />
      <circle cx="9" cy="19" r="2.500" fill="#d8534d" />
      <circle cx="15" cy="14" r="2.500" fill="#58b54e" />
      <circle cx="22" cy="13" r="2.500" fill="#f2c22e" />
      <circle cx="8" cy="26" r="2.500" fill="#4a8fd8" />
      <path d="M18 33L31 8" stroke="#e08a1e" strokeWidth="2.500" />
      <path d="M30 7c1-3 3-5 6-6 0 4-1 7-4 9z" fill="#a9814f" />
    </svg>
  );
}

function ChromeIcon() {
  return (
    <svg viewBox="0 0 36 36" className="size-[36px]">
      <path d="M18 18L32.700 9.500A17 17 0 0 0 3.300 9.500z" fill="#db4437" />
      <path d="M18 18L3.300 9.500A17 17 0 0 0 18 35z" fill="#4aa84f" />
      <path d="M18 18L18 35A17 17 0 0 0 32.700 9.500z" fill="#fbc934" />
      <circle cx="18" cy="18" r="8.500" fill="#fff" />
      <circle cx="18" cy="18" r="6.500" fill="#4285f4" />
    </svg>
  );
}

function RdpIcon() {
  return (
    <svg viewBox="0 0 36 47" className="h-[47px] w-[36px]">
      <path d="M5 2l28 7v21L3 24z" fill="#c8ccd2" />
      <path d="M7 5l24 6v17L5 23z" fill="#0b23b5" />
      <path d="M20 8l11 3v17z" fill="#8fb2ee" />
      <path d="M3 24l30 6v5L4 29z" fill="#aeb2b8" />
      <ellipse cx="14" cy="35" rx="9" ry="4" fill="#bbb" />
      <circle cx="26" cy="37" r="9" fill="#eee" stroke="#999" />
      <path d="M21 34l3 3-3 3M31 34l-3 3 3 3" fill="none" stroke="#2f9a2f" strokeWidth="1.800" />
    </svg>
  );
}

function TaskItem({ children, active, current }: { children: React.ReactNode; active?: boolean; current?: boolean }) {
  return (
    <div className={`relative flex h-[72px] items-center justify-center pr-[3px] ${current ? "bg-[#eef1f8] pb-[10px]" : ""}`}>
      {children}
      {active ? <span className={`absolute right-0 w-[3px] bg-[#0a78d4] ${current ? "inset-y-0" : "inset-y-[7px]"}`} /> : null}
    </div>
  );
}

function Taskbar() {
  return (
    <div className="flex w-[93px] shrink-0 flex-col bg-gradient-to-b from-[#e2e6ef] via-[#e9ecec] to-[#d2d9e9]">
      <div className="flex h-[60px] items-center justify-center pr-[3px]"><WindowsLogo /></div>
      <div className="flex h-[60px] items-center justify-center pr-[3px]">
        <svg viewBox="0 0 24 24" className="size-[24px]" fill="none" stroke="#111" strokeWidth="1.400"><circle cx="15" cy="9" r="8" /><path d="M9 15L1 23" /></svg>
      </div>
      <div className="h-[4px]" />
      <TaskItem><EdgeIcon /></TaskItem>
      <TaskItem><FolderTaskIcon /></TaskItem>
      <TaskItem><MailTaskIcon /></TaskItem>
      <TaskItem><PadIcon /></TaskItem>
      <TaskItem active><BraveIcon /></TaskItem>
      <TaskItem active><PaletteIcon /></TaskItem>
      <TaskItem active><ChromeIcon /></TaskItem>
      <TaskItem active current><RdpIcon /></TaskItem>
      <div className="flex flex-1 flex-col border-b-[3px] border-[#b4b8c2] pb-[4px] pl-[14px] text-[#222]">
        <ChevronLeft className="ml-[-1px] mt-[117px] size-[24px]" strokeWidth={1.300} />
        <div className="mt-[12px] flex items-center">
          <svg viewBox="0 0 24 18" className="h-[18px] w-[24px]" fill="none" stroke="#222" strokeWidth="1.200"><rect x="3" y="1" width="20" height="13" /><rect x="1" y="1" width="5" height="5" /><path d="M3 6v11M12 14v3M8 17h8" /></svg>
          <svg viewBox="0 0 15 24" className="ml-[16px] h-[24px] w-[15px]">
            <rect x="3" y="0" width="9" height="18" rx="3" fill="#000" />
            <path d="M1 12v3c0 3 3 5 6.500 5s6.500-2 6.500-5v-3M7.500 20v3M4 23.500h7" fill="none" stroke="#222" strokeWidth="1" />
          </svg>
        </div>
        <svg viewBox="0 0 24 20" className="mt-[13px] h-[20px] w-[23px]" fill="none" stroke="#222" strokeWidth="1.100">
          <path d="M1 7h4l6-5v16l-6-5H1zM14 7c1 2 1 4 0 6M17 4c2 3 2 9 0 12" />
          <path d="M20 2c3 4 3 12 0 16" stroke="#aaa" />
        </svg>
        <span className="ml-[11px] mt-[46px] text-[17px] leading-[20px] [font-family:'Liberation_Sans',sans-serif]">19:36</span>
        <svg viewBox="0 0 24 24" className="ml-[20px] mt-[48px] size-[24px]" fill="none" stroke="#222" strokeWidth="1.300"><path d="M1 2h22v17h-7l-4 4-4-4H1z" /></svg>
      </div>
    </div>
  );
}

export default function App() {
  return (
    <div className="relative flex h-[1080px] w-[1920px] overflow-hidden bg-white [font-family:'Open_Sans',sans-serif]">
      <div className="flex w-[1827px] shrink-0 flex-col">
        <TabStrip />
        <Toolbar />
        <div className="flex h-[980px]">
          <div className="flex w-[1257px] shrink-0 flex-col bg-[#262626]">
            <SessionHeader />
            <Slide />
            <SessionControls />
          </div>
          <ChatPanel />
        </div>
      </div>
      <RemoteWindow />
      <Taskbar />
    </div>
  );
}
